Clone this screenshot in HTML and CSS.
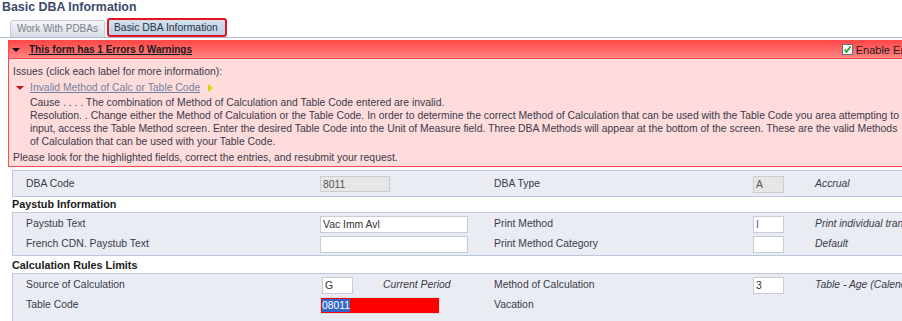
FILE: index.html
```html
<!DOCTYPE html>
<html lang="en">
<head>
  <meta charset="UTF-8">
  <title>Basic DBA Information</title>
  <link rel="stylesheet" href="styles.css">
</head>
<body>

<div class="page">
  <h1 class="page-title">Basic DBA Information</h1>

  <!-- Tabs -->
  <div class="tabs">
    <div class="tab">Work With PDBAs</div>
    <div class="tab tab-active">Basic DBA Information</div>
  </div>

  <!-- Error panel -->
  <div class="errors">
    <div class="errors-header">
      <span class="arrow-down"></span>
      <span class="errors-title">This form has 1 Errors 0 Warnings</span>
      <label class="errors-enable"><span class="check">
        <svg width="9" height="9" viewBox="0 0 9 9"><path d="M1.5 4.5 L3.5 7 L7.5 1.5" fill="none" stroke="#2fa02f" stroke-width="1.8"/></svg>
      </span>Enable Errors</label>
    </div>
    <div class="errors-body">
      <p class="issues">Issues (click each label for more information):</p>
      <div class="issue">
        <span class="arrow-red"></span>
        <a class="issue-link" href="#">Invalid Method of Calc or Table Code</a>
        <span class="arrow-yellow"></span>
      </div>
      <div class="issue-detail">
        Cause . . . . The combination of Method of Calculation and Table Code entered are invalid.<br>
        Resolution. . Change either the Method of Calculation or the Table Code. In order to determine the correct Method of Calculation that can be used with the Table Code you area attempting to<br>
        input, access the Table Method screen. Enter the desired Table Code into the Unit of Measure field. Three DBA Methods will appear at the bottom of the screen. These are the valid Methods<br>
        of Calculation that can be used with your Table Code.
      </div>
      <p class="issues-footer">Please look for the highlighted fields, correct the entries, and resubmit your request.</p>
    </div>
  </div>

  <!-- Form -->
  <div class="form-box box-first">
    <div class="row">
      <span class="label">DBA Code</span>
      <span class="field"><input class="input input-code" type="text" value="8011" disabled></span>
      <span class="label">DBA Type</span>
      <span class="field"><input class="input input-small" type="text" value="A" disabled></span>
      <span class="desc">Accrual</span>
    </div>
  </div>

  <div class="section-title">Paystub Information</div>
  <div class="form-box">
    <div class="row">
      <span class="label">Paystub Text</span>
      <span class="field"><input class="input input-wide" type="text" value="Vac Imm Avl"></span>
      <span class="label">Print Method</span>
      <span class="field"><input class="input input-small input-purple" type="text" value="I"></span>
      <span class="desc">Print individual transactions</span>
    </div>
    <div class="row">
      <span class="label">French CDN. Paystub Text</span>
      <span class="field"><input class="input input-wide" type="text" value=""></span>
      <span class="label">Print Method Category</span>
      <span class="field"><input class="input input-small" type="text" value=""></span>
      <span class="desc">Default</span>
    </div>
  </div>

  <div class="section-title section-gap">Calculation Rules Limits</div>
  <div class="form-box box-last">
    <div class="row">
      <span class="label">Source of Calculation</span>
      <span class="field field-indent"><input class="input input-small" type="text" value="G"><span class="desc desc-inline">Current Period</span></span>
      <span class="label">Method of Calculation</span>
      <span class="field"><input class="input input-small" type="text" value="3"></span>
      <span class="desc">Table - Age (Calendar)</span>
    </div>
    <div class="row">
      <span class="label">Table Code</span>
      <span class="field"><span class="input input-error"><span class="selected">08011</span></span></span>
      <span class="label">Vacation</span>
      <span class="field"></span>
      <span class="desc"></span>
    </div>
  </div>
</div>

</body>
</html>
```

FILE: styles.css
```css
html,
body {
  overflow: hidden;
}

body {
  margin: 0;
  padding: 0;
  font-family: "Liberation Sans", Arial, sans-serif;
  font-size: 10.4px;
  color: #3a3a4a;
  background-color: #fff;
}

.page {
  width: 960px;
}

.page-title {
  margin: 0;
  padding: 0 0 0 2px;
  height: 19px;
  line-height: 15px;
  font-size: 12.4px;
  font-weight: bold;
  color: #3b4a6e;
}

/* Tabs */
.tabs {
  display: flex;
  align-items: flex-end;
  gap: 2px;
  padding-left: 10px;
  border-bottom: 1px solid #a9b9cf;
  height: 18px;
}

.tab {
  height: 16px;
  line-height: 16px;
  padding: 0 6px;
  border: 1px solid #c4cdd8;
  border-bottom: none;
  border-radius: 3px 3px 0 0;
  background: linear-gradient(#f2f4f7, #d8dee6);
  color: #7a7f88;
  font-size: 10px;
}

.tab-active {
  height: 15px;
  line-height: 15px;
  padding: 0 7px 0 5px;
  border: 2px solid #e0151d;
  border-radius: 3px;
  background: linear-gradient(#d4e1ef, #b9cde2);
  color: #2e3440;
  font-size: 10.4px;
}

/* Error panel */
.errors {
  margin: 2px 0 0 8px;
  border: 1px solid #ff4a4a;
  background-color: #ffdcdc;
}

.errors-header {
  display: flex;
  align-items: center;
  height: 17px;
  padding-left: 3px;
  border-bottom: 1px solid #ff4a4a;
  background: linear-gradient(#ff4848, #ff8585);
  color: #1a1a1a;
}

.arrow-down {
  width: 0;
  height: 0;
  margin-right: 9px;
  border-left: 4px solid transparent;
  border-right: 4px solid transparent;
  border-top: 4px solid #111;
}

.errors-title {
  font-weight: bold;
  font-size: 10px;
  text-decoration: underline;
}

.errors-enable {
  display: flex;
  align-items: center;
  margin-left: auto;
  margin-right: 36px;
  color: #1a1a1a;
  font-size: 11px;
}

.check {
  display: flex;
  align-items: center;
  justify-content: center;
  width: 9px;
  height: 9px;
  margin-right: 3px;
  border: 1px solid #6a6f80;
  background-color: #fff;
}

.errors-body {
  padding: 6px 4px 2px 4px;
}

.issues {
  margin: 0;
  line-height: 13px;
}

.issue {
  display: flex;
  align-items: center;
  margin: 3px 0 0 3px;
  height: 13px;
}

.arrow-red {
  width: 0;
  height: 0;
  margin-right: 6px;
  border-left: 4px solid transparent;
  border-right: 4px solid transparent;
  border-top: 4px solid #d0101a;
}

.issue-link {
  color: #7281a3;
  text-decoration: underline;
}

.arrow-yellow {
  width: 0;
  height: 0;
  margin-left: 8px;
  border-top: 4px solid transparent;
  border-bottom: 4px solid transparent;
  border-left: 5px solid #e8d400;
}

.issue-detail {
  margin: 2px 0 0 17px;
  line-height: 13px;
  white-space: nowrap;
  color: #3a3a4a;
}

.issues-footer {
  margin: 3px 0 0 0;
  line-height: 13px;
}

/* Form */
.form-box {
  margin-left: 12px;
  padding: 1px 0;
  border: 1px solid #b9c8db;
  background-color: #e9edf3;
}

.box-first {
  margin-top: 3px;
  padding: 3px 0 2px 0;
}

.box-last {
  padding-bottom: 10px;
}

.section-title {
  margin-left: 12px;
  height: 15px;
  line-height: 15px;
  font-weight: bold;
  font-size: 10.8px;
  color: #1a1a1a;
}

.section-gap {
  height: 17px;
  line-height: 18px;
}

.row {
  display: grid;
  grid-template-columns: 294px 174px 259px 62px 1fr;
  align-items: center;
  height: 20px;
  padding-left: 13px;
}

.label {
  margin-top: -2px;
  color: #3a3a4a;
}

.field {
  display: flex;
  align-items: center;
}

.field-indent {
  padding-left: 2px;
}

.desc {
  margin-top: -2px;
  font-style: italic;
  color: #3a3a4a;
  white-space: nowrap;
}

.desc-inline {
  margin-left: 30px;
}

.input {
  box-sizing: border-box;
  height: 17px;
  margin: 0;
  padding: 0 2px;
  border: 1px solid #c8ccd4;
  background-color: #fff;
  font-family: "Liberation Sans", Arial, sans-serif;
  font-size: 10.4px;
  color: #333;
}

.input:disabled {
  background-color: #e6e6e6;
  color: #555;
}

.input-code {
  width: 70px;
  height: 16px;
}

.input-small {
  width: 31px;
}

.input-wide {
  width: 148px;
}

.input-purple {
  color: #7a3aa0;
}

.input-error {
  display: flex;
  align-items: center;
  width: 120px;
  padding: 0 1px;
  border-color: #e0e0e0;
  background-color: #ff0000;
}

.selected {
  background-color: #3366cc;
  color: #fff;
  line-height: 13px;
}
```
